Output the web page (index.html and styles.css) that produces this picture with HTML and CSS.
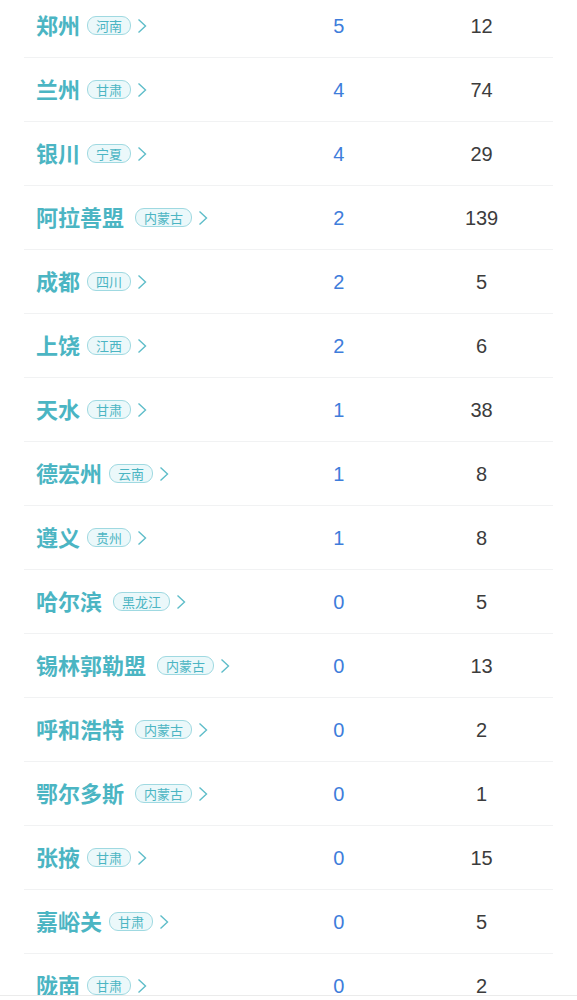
FILE: index.html
```html
<!DOCTYPE html>
<html lang="zh-CN">
<head>
<meta charset="utf-8">
<title>城市列表</title>
<link rel="stylesheet" href="styles.css">
</head>
<body>
<div class="list">
  <div class="row"><div class="city"><span class="name">郑州</span><span class="tag">河南</span><svg class="chev" viewBox="0 0 10 16"><path d="M1.5 1.5 L8.5 8 L1.5 14.5"/></svg></div><div class="num blue">5</div><div class="num dark">12</div></div>
  <div class="row"><div class="city"><span class="name">兰州</span><span class="tag">甘肃</span><svg class="chev" viewBox="0 0 10 16"><path d="M1.5 1.5 L8.5 8 L1.5 14.5"/></svg></div><div class="num blue">4</div><div class="num dark">74</div></div>
  <div class="row"><div class="city"><span class="name">银川</span><span class="tag">宁夏</span><svg class="chev" viewBox="0 0 10 16"><path d="M1.5 1.5 L8.5 8 L1.5 14.5"/></svg></div><div class="num blue">4</div><div class="num dark">29</div></div>
  <div class="row"><div class="city"><span class="name">阿拉善盟</span><span class="tag wide">内蒙古</span><svg class="chev" viewBox="0 0 10 16"><path d="M1.5 1.5 L8.5 8 L1.5 14.5"/></svg></div><div class="num blue">2</div><div class="num dark">139</div></div>
  <div class="row"><div class="city"><span class="name">成都</span><span class="tag">四川</span><svg class="chev" viewBox="0 0 10 16"><path d="M1.5 1.5 L8.5 8 L1.5 14.5"/></svg></div><div class="num blue">2</div><div class="num dark">5</div></div>
  <div class="row"><div class="city"><span class="name">上饶</span><span class="tag">江西</span><svg class="chev" viewBox="0 0 10 16"><path d="M1.5 1.5 L8.5 8 L1.5 14.5"/></svg></div><div class="num blue">2</div><div class="num dark">6</div></div>
  <div class="row"><div class="city"><span class="name">天水</span><span class="tag">甘肃</span><svg class="chev" viewBox="0 0 10 16"><path d="M1.5 1.5 L8.5 8 L1.5 14.5"/></svg></div><div class="num blue">1</div><div class="num dark">38</div></div>
  <div class="row"><div class="city"><span class="name">德宏州</span><span class="tag">云南</span><svg class="chev" viewBox="0 0 10 16"><path d="M1.5 1.5 L8.5 8 L1.5 14.5"/></svg></div><div class="num blue">1</div><div class="num dark">8</div></div>
  <div class="row"><div class="city"><span class="name">遵义</span><span class="tag">贵州</span><svg class="chev" viewBox="0 0 10 16"><path d="M1.5 1.5 L8.5 8 L1.5 14.5"/></svg></div><div class="num blue">1</div><div class="num dark">8</div></div>
  <div class="row"><div class="city"><span class="name">哈尔滨</span><span class="tag wide">黑龙江</span><svg class="chev" viewBox="0 0 10 16"><path d="M1.5 1.5 L8.5 8 L1.5 14.5"/></svg></div><div class="num blue">0</div><div class="num dark">5</div></div>
  <div class="row"><div class="city"><span class="name">锡林郭勒盟</span><span class="tag wide">内蒙古</span><svg class="chev" viewBox="0 0 10 16"><path d="M1.5 1.5 L8.5 8 L1.5 14.5"/></svg></div><div class="num blue">0</div><div class="num dark">13</div></div>
  <div class="row"><div class="city"><span class="name">呼和浩特</span><span class="tag wide">内蒙古</span><svg class="chev" viewBox="0 0 10 16"><path d="M1.5 1.5 L8.5 8 L1.5 14.5"/></svg></div><div class="num blue">0</div><div class="num dark">2</div></div>
  <div class="row"><div class="city"><span class="name">鄂尔多斯</span><span class="tag wide">内蒙古</span><svg class="chev" viewBox="0 0 10 16"><path d="M1.5 1.5 L8.5 8 L1.5 14.5"/></svg></div><div class="num blue">0</div><div class="num dark">1</div></div>
  <div class="row"><div class="city"><span class="name">张掖</span><span class="tag">甘肃</span><svg class="chev" viewBox="0 0 10 16"><path d="M1.5 1.5 L8.5 8 L1.5 14.5"/></svg></div><div class="num blue">0</div><div class="num dark">15</div></div>
  <div class="row"><div class="city"><span class="name">嘉峪关</span><span class="tag">甘肃</span><svg class="chev" viewBox="0 0 10 16"><path d="M1.5 1.5 L8.5 8 L1.5 14.5"/></svg></div><div class="num blue">0</div><div class="num dark">5</div></div>
  <div class="row"><div class="city"><span class="name">陇南</span><span class="tag">甘肃</span><svg class="chev" viewBox="0 0 10 16"><path d="M1.5 1.5 L8.5 8 L1.5 14.5"/></svg></div><div class="num blue">0</div><div class="num dark">2</div></div>
</div>
<div class="footer"></div>
</body>
</html>
```
FILE: styles.css
```css
html, body {
  margin: 0;
  padding: 0;
  background: #ffffff;
  overflow: hidden;
  height: 1000px;
}
body {
  font-family: "Liberation Sans", "Noto Sans CJK SC", sans-serif;
}
.list {
  margin: -6px 24px 0 24px;
}
.row {
  display: grid;
  grid-template-columns: 46% 27% 27%;
  align-items: center;
  height: 63px;
  border-bottom: 1px solid #f1f2f3;
}
.city {
  display: flex;
  align-items: center;
  padding-left: 12px;
  white-space: nowrap;
}
.name {
  font-family: "Noto Sans CJK SC", sans-serif;
  font-size: 22px;
  font-weight: 700;
  color: #4bb5c3;
  line-height: 26px;
  padding-bottom: 4px;
}
.tag {
  margin-left: 7px;
  font-family: "Noto Sans CJK SC", sans-serif;
  font-size: 13px;
  line-height: 17px;
  color: #4bb5c3;
  background: #ebf8fa;
  border: 1px solid #9fd9e1;
  border-radius: 9px;
  padding: 0 8px;
}
.tag.wide {
  margin-left: 11px;
}
.chev {
  width: 10px;
  height: 16px;
  margin-left: 6px;
  fill: none;
  stroke: #5ebdc9;
  stroke-width: 1.4;
}
.num {
  text-align: center;
  font-size: 20px;
  line-height: 24px;
}
.blue {
  color: #3e7ddb;
}
.dark {
  color: #3c3c3c;
}
.footer {
  position: fixed;
  left: 0;
  right: 0;
  bottom: 0;
  height: 4px;
  background: #ffffff;
  border-top: 1px solid #ebebeb;
}
```
